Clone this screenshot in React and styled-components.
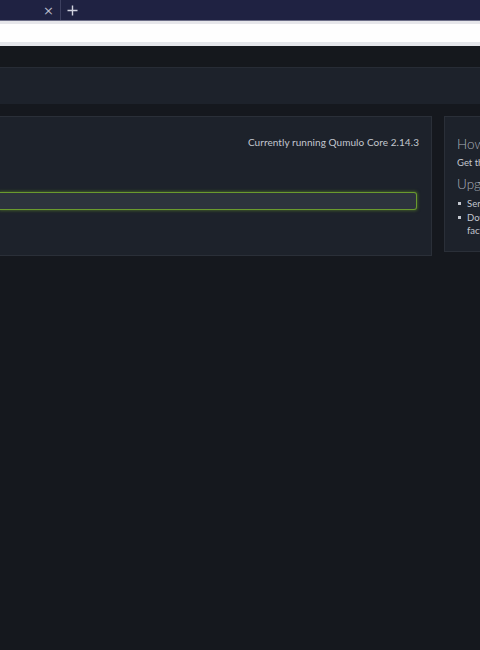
import React from "react";
import styled, { createGlobalStyle } from "styled-components";

const Global = createGlobalStyle`
  html, body { margin: 0; padding: 0; background: #15181e; overflow: hidden; }
  body { width: 480px; height: 650px; font-family: Lato, "Open Sans", sans-serif; }
  #root { width: 480px; height: 650px; overflow: hidden; }
`;

const TabBar = styled.div`
  height: 20px;
  background: #1f2242;
  display: flex;
  align-items: stretch;
  border-bottom: 1px solid #6b6d86;
`;

const Tab = styled.div`
  width: 61px;
  display: flex;
  align-items: center;
  justify-content: flex-end;
  padding-right: 6px;
  box-sizing: border-box;
  border-right: 1px solid #3d4060;
  color: #b6b8c8;
  font-size: 13px;
  font-family: "DejaVu Sans", sans-serif;
`;

const NewTab = styled.div`
  width: 22px;
  display: flex;
  align-items: center;
  justify-content: center;
  color: #d0d2de;
`;

const AddressBar = styled.div`
  height: 25px;
  box-sizing: border-box;
  background: #fefefe;
  border-top: 3px solid #e6e6ea;
  border-bottom: 4px solid #e4e6ea;
`;

const TopDark = styled.div`
  height: 21px;
  background: #15181d;
`;

const Header = styled.div`
  height: 37px;
  background: #1d222b;
  border-top: 1px solid #272c35;
  box-sizing: border-box;
`;

const Content = styled.div`
  display: grid;
  grid-template-columns: 432px 200px;
  gap: 12px;
  padding-top: 12px;
  align-items: start;
`;

const Card = styled.div`
  background: #1d222b;
  border: 1px solid #2a2f38;
  border-left: none;
  box-sizing: border-box;
  height: ${(p) => p.$h}px;
`;

const MainCard = styled(Card)`
  padding: 18px 12px 0 0;
`;

const Running = styled.div`
  text-align: right;
  color: #c3c7cf;
  font-size: 10px;
  letter-spacing: 0.06px;
  line-height: 14px;
`;

const Field = styled.div`
  margin-top: 43px;
  margin-right: 2px;
  height: 18px;
  box-sizing: border-box;
  background: #2d333d;
  border: 1px solid #6a9a2e;
  border-left: none;
  border-radius: 0 3px 3px 0;
  box-shadow: 0 0 3px 1px rgba(96, 140, 40, 0.5);
`;

const SideCard = styled(Card)`
  border-left: 1px solid #2a2f38;
  padding: 18px 12px 0 12px;
  color: #c3c7cf;
  white-space: nowrap;
  overflow: hidden;
`;

const SideTitle = styled.div`
  font-size: 13.5px;
  font-weight: 300;
  color: #aab0b9;
  line-height: 18px;
  margin-top: ${(p) => p.$mt || 0}px;
`;

const SideText = styled.div`
  font-size: 9.5px;
  line-height: 13px;
  margin-top: 3px;
`;

const List = styled.ul`
  list-style: none;
  margin: 4px 0 0 0;
  padding: 0;
  font-size: 9.5px;
`;

const Item = styled.li`
  position: relative;
  padding-left: 10px;
  line-height: 13px;
  margin-bottom: 1px;
  &::before {
    content: "";
    position: absolute;
    left: 1px;
    top: 5px;
    width: 3px;
    height: 3px;
    background: #c3c7cf;
  }
`;

export default function App() {
  return (
    <>
      <Global />
      <TabBar>
        <Tab>×</Tab>
        <NewTab>
          <svg width="11" height="11" viewBox="0 0 11 11">
            <path d="M5.5 0.5v10M0.5 5.5h10" stroke="#d0d2de" strokeWidth="1.4" />
          </svg>
        </NewTab>
      </TabBar>
      <AddressBar />
      <TopDark />
      <Header />
      <Content>
        <MainCard $h={140}>
          <Running>Currently running Qumulo Core 2.14.3</Running>
          <Field />
        </MainCard>
        <SideCard $h={136}>
          <SideTitle>How to upgrade</SideTitle>
          <SideText>Get the latest version</SideText>
          <SideTitle $mt={6}>Upgrade steps</SideTitle>
          <List>
            <Item>Send</Item>
            <Item>
              Download the upgrade image from the
              <br />
              factory release page
            </Item>
          </List>
        </SideCard>
      </Content>
    </>
  );
}
